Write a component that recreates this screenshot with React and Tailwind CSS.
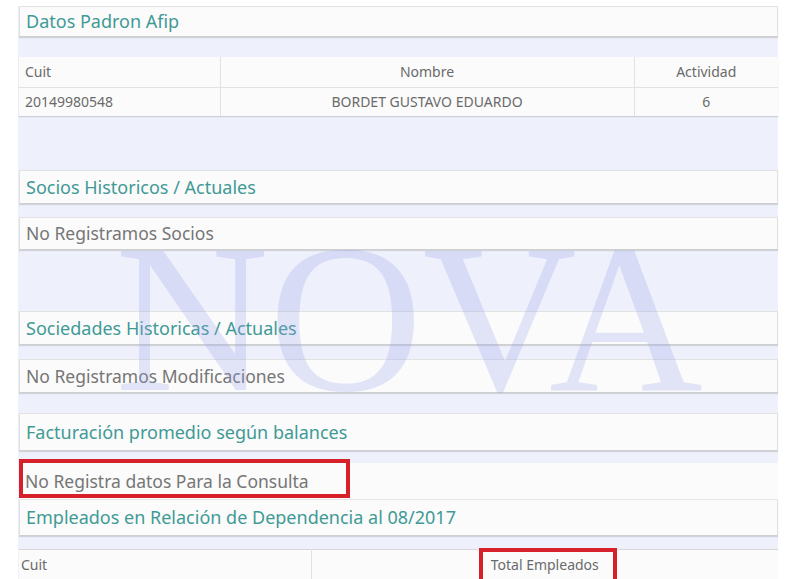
import React from 'react';

const teal = 'text-[#3f9a96] text-[18px]';
const gray = 'text-[#767676] text-[17.5px]';

function Panel({ children, className = '', text = teal }) {
  return (
    <div
      className={`flex items-center bg-[#fbfbfb] border border-[#e2e2e2] border-b-[#cfcfcf] shadow-[0_1px_1px_rgba(0,0,0,0.12)] pl-[6px] ${text} ${className}`}
    >
      {children}
    </div>
  );
}

export default function App() {
  return (
    <div className="w-[800px] h-[579px] bg-white overflow-hidden font-['Noto_Sans',sans-serif]">
      <div className="relative ml-[18px] mt-[6px] w-[760px] h-[600px] bg-[#eef1fb] pl-px">
        <Panel className="h-[31px]">Datos Padron Afip</Panel>

        <table className="mt-[20px] w-full border-collapse bg-[#fbfbfb] text-[14px] text-[#6a6a6a] shadow-[0_1px_1px_rgba(0,0,0,0.15)]">
          <tbody>
            <tr className="h-[30px] border-b border-[#e2e2e2]">
              <td className="w-[201px] pl-[6px] border-r border-[#e2e2e2]">Cuit</td>
              <td className="w-[414px] text-center border-r border-[#e2e2e2]">Nombre</td>
              <td className="text-center">Actividad</td>
            </tr>
            <tr className="h-[29px]">
              <td className="pl-[6px] border-r border-[#e2e2e2]">20149980548</td>
              <td className="text-center border-r border-[#e2e2e2]">BORDET GUSTAVO EDUARDO</td>
              <td className="text-center">6</td>
            </tr>
          </tbody>
        </table>

        <Panel className="mt-[54px] h-[34px]">Socios Historicos / Actuales</Panel>
        <Panel className="mt-[13px] h-[33px]" text={gray}>No Registramos Socios</Panel>

        <Panel className="mt-[61px] h-[34px]">Sociedades Historicas / Actuales</Panel>
        <Panel className="mt-[14px] h-[34px]" text={gray}>No Registramos Modificaciones</Panel>

        <Panel className="mt-[20px] h-[38px]">Facturación promedio según balances</Panel>
        <div className={`mt-[12px] h-[37px] flex items-center pl-[6px] bg-[#fbfbfb] border-b border-[#e6e6e6] ${gray}`}>
          No Registra datos Para la Consulta
        </div>
        <Panel className="h-[36px] border-t-0">Empleados en Relación de Dependencia al 08/2017</Panel>

        <table className="mt-[13px] w-full border-collapse bg-[#fbfbfb] text-[14px] text-[#6a6a6a] border-t border-[#d8d8d8]">
          <tbody>
            <tr className="h-[30px]">
              <td className="w-[292px] pl-[2px] border-r border-[#e2e2e2]">Cuit</td>
              <td className="text-center">Total Empleados</td>
            </tr>
          </tbody>
        </table>

        {/* annotation boxes */}
        <div className="absolute left-[1px] top-[453px] w-[331px] h-[39px] border-[4px] border-[#d6212b]" />
        <div className="absolute left-[461px] top-[542px] w-[138px] h-[50px] border-[4px] border-[#d6212b]" />

        {/* watermark */}
        <div className="pointer-events-none absolute left-[97px] top-[206px] font-['Liberation_Serif',serif] text-[213px] leading-none text-[rgba(150,160,230,0.26)] whitespace-nowrap">
          NOVA
        </div>
      </div>
    </div>
  );
}
